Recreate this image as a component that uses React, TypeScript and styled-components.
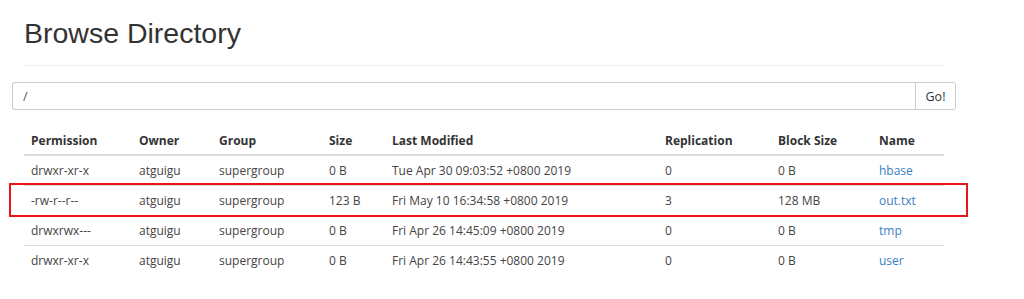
import styled, { createGlobalStyle } from 'styled-components';

const GlobalStyle = createGlobalStyle`
  body {
    margin: 0;
    background: #fff;
    color: #333;
    font-family: "Open Sans", "Noto Sans", sans-serif;
    font-size: 12px;
  }
`;

const Container = styled.div`
  width: 944px;
  margin-left: 12px;
`;

const PageHeader = styled.div`
  margin: 17px 12px 0;
  padding-bottom: 16px;
  border-bottom: 1px solid #eee;
`;

const Title = styled.h1`
  margin: 0;
  font-family: "Liberation Sans", Arial, sans-serif;
  font-size: 28.5px;
  font-weight: 400;
  line-height: 32px;
  color: #333;
`;

const InputGroup = styled.div`
  display: flex;
  margin-top: 16px;
  height: 28px;
`;

const PathInput = styled.input`
  flex: 1;
  min-width: 0;
  height: 28px;
  box-sizing: border-box;
  padding: 0 10px;
  border: 1px solid #ccc;
  border-right: 0;
  border-radius: 3px 0 0 3px;
  font-family: inherit;
  font-size: 12.5px;
  color: #555;
  outline: none;
`;

const GoButton = styled.button`
  width: 41px;
  height: 28px;
  box-sizing: border-box;
  padding: 0;
  border: 1px solid #ccc;
  border-radius: 0 3px 3px 0;
  background: #fff;
  font-family: inherit;
  font-size: 12.5px;
  color: #333;
  cursor: pointer;
`;

const TableWrap = styled.div`
  margin: 14px 12px 0;
`;

const Table = styled.table`
  width: 100%;
  border-collapse: collapse;
  table-layout: fixed;
`;

const Th = styled.th<{ $w: number }>`
  width: ${(p) => p.$w}px;
  box-sizing: border-box;
  padding: 9px 7px 6px;
  line-height: 15px;
  text-align: left;
  font-weight: 700;
  color: #333;
  border-bottom: 2px solid #ddd;
`;

const Row = styled.tr<{ $marked?: boolean }>`
  position: relative;

  &::after {
    content: '';
    display: ${(p) => (p.$marked ? 'block' : 'none')};
    position: absolute;
    left: -15px;
    right: -24px;
    top: -3px;
    bottom: -1px;
    border: 2px solid #e8141e;
    pointer-events: none;
  }
`;

const Td = styled.td`
  padding: 7px;
  line-height: 15px;
  border-top: 1px solid #ddd;
  color: #444;
  white-space: nowrap;
`;

const NameLink = styled.a`
  color: #3a7fc4;
  text-decoration: none;
`;

const columns = [
  { label: 'Permission', w: 108 },
  { label: 'Owner', w: 80 },
  { label: 'Group', w: 110 },
  { label: 'Size', w: 63 },
  { label: 'Last Modified', w: 273 },
  { label: 'Replication', w: 113 },
  { label: 'Block Size', w: 101 },
  { label: 'Name', w: 72 },
];

const files = [
  { perm: 'drwxr-xr-x', size: '0 B', modified: 'Tue Apr 30 09:03:52 +0800 2019', repl: '0', block: '0 B', name: 'hbase' },
  { perm: '-rw-r--r--', size: '123 B', modified: 'Fri May 10 16:34:58 +0800 2019', repl: '3', block: '128 MB', name: 'out.txt', marked: true },
  { perm: 'drwxrwx---', size: '0 B', modified: 'Fri Apr 26 14:45:09 +0800 2019', repl: '0', block: '0 B', name: 'tmp' },
  { perm: 'drwxr-xr-x', size: '0 B', modified: 'Fri Apr 26 14:43:55 +0800 2019', repl: '0', block: '0 B', name: 'user' },
];

export default function App() {
  return (
    <>
      <GlobalStyle />
      <Container>
        <PageHeader>
          <Title>Browse Directory</Title>
        </PageHeader>
        <InputGroup>
          <PathInput defaultValue="/" />
          <GoButton>Go!</GoButton>
        </InputGroup>
        <TableWrap>
          <Table>
            <thead>
              <tr>
                {columns.map((c) => (
                  <Th key={c.label} $w={c.w}>
                    {c.label}
                  </Th>
                ))}
              </tr>
            </thead>
            <tbody>
              {files.map((f) => (
                <Row key={f.name} $marked={f.marked}>
                  <Td>{f.perm}</Td>
                  <Td>atguigu</Td>
                  <Td>supergroup</Td>
                  <Td>{f.size}</Td>
                  <Td>{f.modified}</Td>
                  <Td>{f.repl}</Td>
                  <Td>{f.block}</Td>
                  <Td>
                    <NameLink href="#">{f.name}</NameLink>
                  </Td>
                </Row>
              ))}
            </tbody>
          </Table>
        </TableWrap>
      </Container>
    </>
  );
}
